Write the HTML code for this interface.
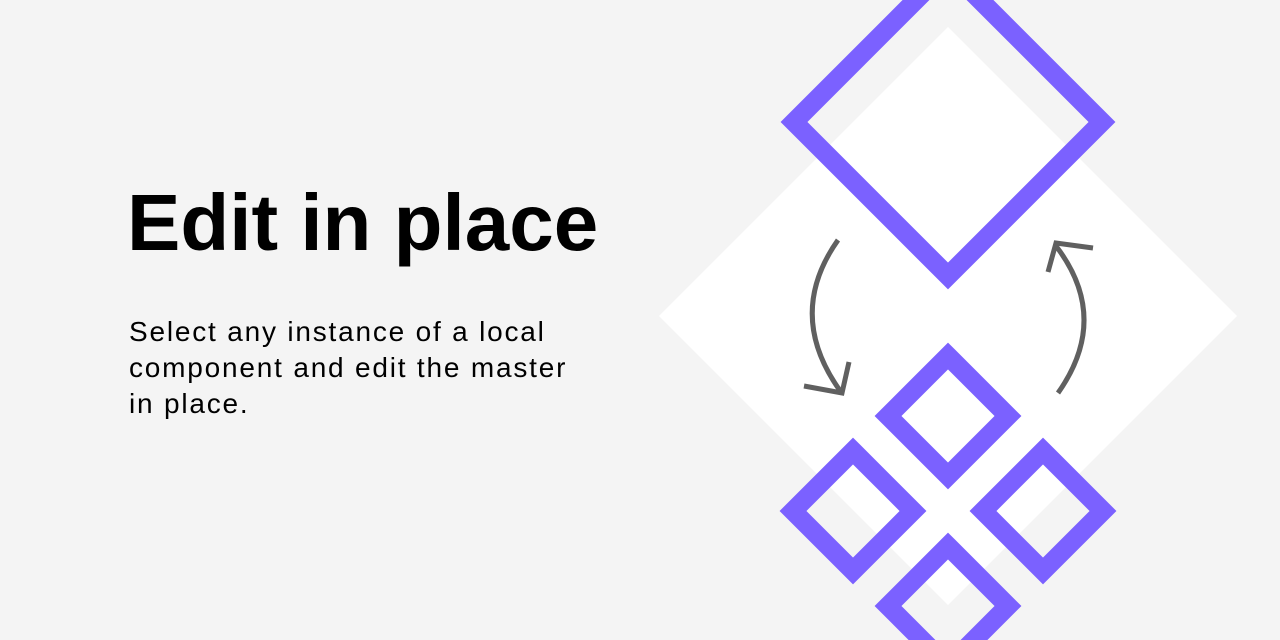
<!DOCTYPE html>
<html><head><style>
body{margin:0;width:1280px;height:640px;background:#f4f4f4;overflow:hidden;position:relative;font-family:"Liberation Sans",sans-serif}
h1{position:absolute;left:127px;top:178px;margin:0;font-size:80px;font-weight:bold;color:#000;letter-spacing:0px;line-height:90px;white-space:nowrap}
p{position:absolute;left:129px;top:314px;margin:0;font-size:28px;line-height:36px;color:#000;letter-spacing:1.8px;white-space:nowrap}
svg{position:absolute;left:0;top:0}
</style></head><body>
<svg width="1280" height="640">
<polygon points="948,27 1237,316 948,605 659,316" fill="#fff"/>
<g fill="none" stroke="#7b61ff" stroke-width="19">
<polygon points="948,-32 1102,122 948,276 794,122"/>
<polygon points="948,356 1008,416 948,476 888,416"/>
<polygon points="853,451 913,511 853,571 793,511"/>
<polygon points="1043,451 1103,511 1043,571 983,511"/>
<polygon points="948,546 1008,606 948,666 888,606"/>
</g>
<g fill="none" stroke="#606060" stroke-width="5">
<path d="M838,240 Q785,315 841,392"/>
<path d="M804,386 L842,393 L849,362"/>
<path d="M1058,393 Q1111,318 1056,246"/>
<path d="M1093,248 L1056,243 L1048,272"/>
</g>
</svg>
<h1>Edit in place</h1>
<p>Select any instance of a local<br>component and edit the master<br>in place.</p>
</body></html>
